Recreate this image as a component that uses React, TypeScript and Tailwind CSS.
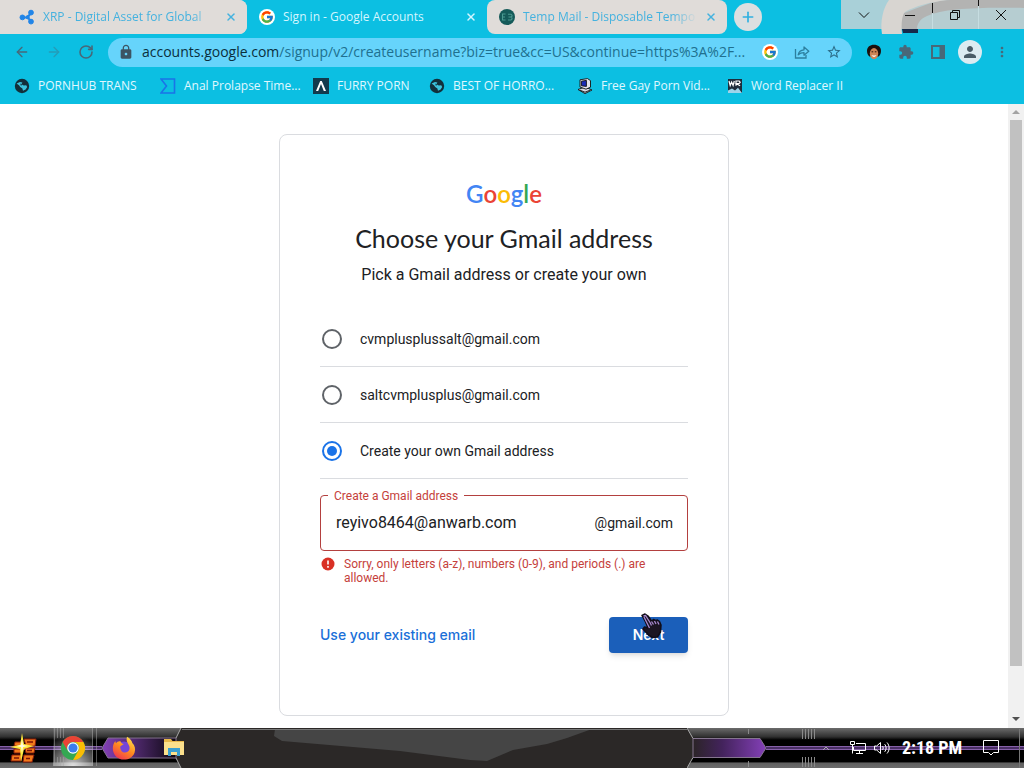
import { useState } from 'react';
import type { ReactNode } from 'react';
import { FcGoogle } from 'react-icons/fc';
import { MdLock, MdStarBorder, MdExtension, MdPerson, MdMoreVert } from 'react-icons/md';
import { ArrowLeft, ArrowRight, RotateCw, X, Plus } from 'lucide-react';

// -----------------------------------------------------------
// SMALL ICONS
// -----------------------------------------------------------
function RippleIcon() {
  return (
    <svg viewBox="0 0 16 16" className="size-4 shrink-0" fill="#2185e8" stroke="#2185e8">
      <path d="M4 8.4 8.5 8.2 12 4M8.5 8.2l3.5 4.3" fill="none" strokeWidth="2" />
      <circle cx="3.4" cy="8.4" r="2.4" />
      <circle cx="12" cy="3.6" r="2.4" />
      <circle cx="12" cy="12.6" r="2.4" />
      <circle cx="8.6" cy="8.2" r="1.6" />
    </svg>
  );
}

function GoogleBadge() {
  return (
    <span className="flex size-4 shrink-0 items-center justify-center rounded-full bg-white">
      <FcGoogle className="size-[14px]" />
    </span>
  );
}

function TempMailIcon() {
  return (
    <svg viewBox="0 0 16 16" className="size-4 shrink-0">
      <circle cx="8" cy="8" r="8" fill="#155a59" />
      <path d="M6.5 5H3.5v6h3M3.5 8h2.5M9 5.2h3l1 1v1l-1 .8H9.5M12 8l1 1v1l-1 1H9" fill="none" stroke="#4b9a91" strokeWidth="1.1" />
    </svg>
  );
}

function GlobeIcon() {
  return (
    <svg viewBox="0 0 16 16" className="size-4 shrink-0">
      <circle cx="8" cy="8" r="7.2" fill="#12303b" />
      <path d="M2.6 5.6 6 4l2.4.6-1 1.6 2.4 1.4 2.4-.4 1 1.8-1.6 2.6-2.6 1.2-.6-2.2L6.2 9 5 7.2z" fill="#3cc3dc" />
      <path d="M6.2 5.6 8 6.4 7 8z" fill="#12303b" />
    </svg>
  );
}

function SigmaIcon() {
  return (
    <svg viewBox="0 0 16 16" className="size-4 shrink-0" fill="none" stroke="#1a73e8" strokeWidth="1.6">
      <path d="M1 1h13.5v14H1l5.5-7z" />
    </svg>
  );
}

function PeakIcon() {
  return (
    <svg viewBox="0 0 16 16" className="size-4 shrink-0">
      <rect width="16" height="16" fill="#123a4d" />
      <path d="M3 13 7.2 3h1.6L13 13h-2.2L8 6l-2.8 7z" fill="#fff" />
    </svg>
  );
}

function OldPcIcon() {
  return (
    <svg viewBox="0 0 16 16" className="size-4 shrink-0" stroke="#111" strokeWidth=".9">
      <path d="M1 11.5 8 9l7 3-7 3.6z" fill="#d8d8e2" />
      <path d="M3 1.8 10.5.6l3 2v6.6l-4.5 2L3 9z" fill="#e4e4ee" />
      <path d="M4.4 3.2 9.4 2.4v6L4.4 7.8z" fill="#1a2cb8" />
      <path d="M3 12.2l5 2 5-2" fill="none" />
    </svg>
  );
}

function WordIcon() {
  return (
    <svg viewBox="0 0 16 16" className="size-4 shrink-0">
      <path d="M1 1h14v14H1z" fill="#1d2c3b" />
      <path d="M2 3l1.2 4.5L4.6 4l1.5 3.5L7.3 3M9 7.8V3h3.2l1 1.2-1 1.3H9.3l3.8 2.3" fill="none" stroke="#fff" strokeWidth="1.2" />
      <path d="M1 15v-2.6l4-2 3 2 3-2.6 4 5.2z" fill="#9fd4ea" />
    </svg>
  );
}

function ShareIcon() {
  return (
    <svg viewBox="0 0 16 16" className="size-4" fill="none" stroke="#2c7f9e" strokeWidth="1.3">
      <path d="M1.5 5v9h10.5v-3" />
      <path d="M4.2 10.8c.6-3.4 2.6-4.8 5.8-5V3l4.8 4.2L10 11.2V8.6c-2.4 0-4.2.6-5.8 2.2z" strokeLinejoin="round" />
    </svg>
  );
}

function FaceIcon() {
  return (
    <svg viewBox="0 0 16 16" className="size-4">
      <path d="M1 7C1 3 4 .8 8 .8S15 3 15 7c0 2.6-1 4.4-2.4 5.4H3.4C2 11.4 1 9.6 1 7z" fill="#1b100d" />
      <ellipse cx="8" cy="9.6" rx="4.2" ry="5.6" fill="#cf8556" />
      <path d="M5.600 7.800h1.600M8.800 7.800h1.600" stroke="#2b140c" strokeWidth="1" />
      <path d="M5.600 11c1.300.8 3.500.8 4.800 0-.4 2.400-4.400 2.400-4.800 0z" fill="#fff" />
    </svg>
  );
}

function SidePanelIcon() {
  return (
    <svg viewBox="0 0 16 16" className="size-4">
      <rect x="2" y="2" width="12" height="12" fill="none" stroke="#486879" strokeWidth="2" />
      <rect x="9.5" y="2" width="4.5" height="12" fill="#486879" />
    </svg>
  );
}

// -----------------------------------------------------------
// TAB STRIP
// -----------------------------------------------------------
interface TabProps {
  icon: ReactNode;
  title: string;
  active?: boolean;
}

function Tab({ icon, title, active }: TabProps) {
  return (
    <div
      className={
        active
          ? 'flex h-[34px] w-60 items-center gap-2 pr-[10px] pl-3 text-[#d4f6ff]'
          : 'flex h-[34px] w-60 items-center gap-2 rounded-lg bg-[#e0dcd9] pr-[10px] pl-3 text-[#45b2df]'
      }
    >
      {icon}
      <button
        className={
          active
            ? 'min-w-0 flex-1 text-left whitespace-nowrap'
            : 'min-w-0 flex-1 mask-r-from-85% text-left whitespace-nowrap'
        }
      >
        {title}
      </button>
      <button aria-label="Close tab" className="shrink-0">
        <X className="size-3" strokeWidth={3} />
      </button>
    </div>
  );
}

function WindowControls() {
  return (
    <div className="relative ml-auto flex h-[29px] w-[183px] self-start bg-[#a9d0d8]">
      {/* theme artwork showing through the caption buttons */}
      <svg viewBox="0 0 183 34" className="absolute top-0 left-0 h-[34px] w-full">
        <path d="M60 0h123v29H60z" fill="#b6cdd1" />
        <path d="M60 14C78 8 92 0 110 0h73v8c-40-1-80 0-97 8-7 3-10 8-10 13H60z" fill="#b3b3b2" />
        <path d="M48 0h58c-16 2-32 6-42 12-3 3-4 11-3 22H41c-2-12 1-26 7-34z" fill="#d8d5d1" />
        <path d="M61 29h16v4H62z" fill="#15294a" />
        <path d="M91.5 12v17M137.5 6v23" stroke="#c6dde1" />
        <path d="M91.5 3v10M137.5 0v6" stroke="#111" />
      </svg>
      <button aria-label="Search tabs" className="relative flex flex-1 items-center justify-center">
        <svg viewBox="0 0 12 12" className="size-3" fill="none" stroke="#111">
          <path d="M1 3.5l5 5 5-5" />
        </svg>
      </button>
      <button aria-label="Minimize" className="relative flex flex-1 items-center justify-center">
        <svg viewBox="0 0 12 12" className="size-3" fill="none" stroke="#111">
          <path d="M1 6.5h10" />
        </svg>
      </button>
      <button aria-label="Restore" className="relative flex flex-1 items-center justify-center">
        <svg viewBox="0 0 12 12" className="size-3" fill="none" stroke="#111">
          <path d="M1.5 3.5h7v7h-7zM3.5 3.5v-2h7v7h-2" />
        </svg>
      </button>
      <button aria-label="Close" className="relative flex flex-1 items-center justify-center">
        <svg viewBox="0 0 12 12" className="size-3" fill="none" stroke="#111">
          <path d="M1 1l10 10M11 1L1 11" />
        </svg>
      </button>
    </div>
  );
}

// -----------------------------------------------------------
// TOOLBAR + BOOKMARKS
// -----------------------------------------------------------
function Toolbar() {
  return (
    <div className="flex h-9 items-center px-[14px] text-[#486879]">
      <div className="flex w-[94px] shrink-0 items-center gap-4">
        <button aria-label="Back"><ArrowLeft className="size-4" /></button>
        <button aria-label="Forward" className="opacity-40"><ArrowRight className="size-4" /></button>
        <button aria-label="Reload"><RotateCw className="size-4" strokeWidth={2.4} /></button>
      </div>
      <div className="flex h-[29px] min-w-0 flex-1 items-center gap-4 rounded-full bg-[#66d4fb] px-[10px]">
        <div className="flex min-w-0 flex-1 items-center gap-2">
          <MdLock className="size-4 shrink-0 text-[#3c5463]" />
          <div className="truncate text-sm text-[#20708f]">
            <span className="text-[#0a2f3d]">accounts.google.com</span>
            /signup/v2/createusername?biz=true&amp;cc=US&amp;continue=https%3A%2F...
          </div>
        </div>
        <GoogleBadge />
        <button aria-label="Share"><ShareIcon /></button>
        <button aria-label="Bookmark this page" className="text-[#2c6d89]"><MdStarBorder className="size-4" /></button>
      </div>
      <div className="ml-[14px] flex shrink-0 items-center gap-4">
        <button aria-label="Extension"><FaceIcon /></button>
        <button aria-label="Extensions"><MdExtension className="size-4" /></button>
        <button aria-label="Side panel"><SidePanelIcon /></button>
        <button aria-label="Profile" className="-mx-1 flex size-6 items-center justify-center rounded-full bg-[#dcebf1]">
          <MdPerson className="size-[18px] text-[#4a5b66]" />
        </button>
        <button aria-label="Menu"><MdMoreVert className="size-4" /></button>
      </div>
    </div>
  );
}

const bookmarks = [
  { icon: <GlobeIcon />, label: 'PORNHUB TRANS', width: 'w-[146px]' },
  { icon: <SigmaIcon />, label: 'Anal Prolapse Time...', width: 'w-[153px]' },
  { icon: <PeakIcon />, label: 'FURRY PORN', width: 'w-[116px]' },
  { icon: <GlobeIcon />, label: 'BEST OF HORRO...', width: 'w-[148px]' },
  { icon: <OldPcIcon />, label: 'Free Gay Porn Vid...', width: 'w-[150px]' },
  { icon: <WordIcon />, label: 'Word Replacer II', width: 'w-[150px]' },
];

function BookmarksBar() {
  return (
    <nav className="flex h-[34px] items-center pb-[2px] pl-[14px] text-xs text-[#e0f8ff]">
      {bookmarks.map((b) => (
        <a key={b.label} href="#" className={`flex shrink-0 items-center gap-2 whitespace-nowrap ${b.width}`}>
          {b.icon}
          {b.label}
        </a>
      ))}
    </nav>
  );
}

// -----------------------------------------------------------
// SIGN-UP CARD
// -----------------------------------------------------------
const choices = ['cvmplusplussalt@gmail.com', 'saltcvmplusplus@gmail.com', 'Create your own Gmail address'];

function HandCursor() {
  return (
    <svg viewBox="0 0 22 26" className="pointer-events-none absolute -top-1 left-8 h-[26px] w-[22px]">
      <path
        d="M1 2.5 4 1l3 2 3.5 5 2-1.5 2 1 2-.5 2 1.5 1.500 3.500-.5 7-3 5-5 .5-4-2.500L2 16l1.500-2 3.500 1L4.500 9z"
        fill="#1b1522"
        stroke="#100c18"
        strokeWidth="1.5"
        strokeLinejoin="round"
      />
      <path d="M2.500 3 4.500 2.500 9 9.500l1.500 3M10.500 8.500l2 3M13.500 8l1.500 3M16.500 8.500l1.500 3M3 4l4 8 1.500 3" fill="none" stroke="#a98ad0" strokeWidth="1.3" />
    </svg>
  );
}

function SignupCard() {
  const [choice, setChoice] = useState(2);
  const [name, setName] = useState('reyivo8464@anwarb.com');

  return (
    <form
      onSubmit={(e) => e.preventDefault()}
      className="mt-[30px] h-fit w-[450px] rounded-lg border border-[#dadce0] px-10 pt-[47px] pb-[62px] font-[Roboto,sans-serif] text-[#202124]"
    >
      <div role="img" aria-label="Google" className="text-center font-[Lato,sans-serif] text-2xl/6 font-semibold">
        <span className="text-[#4285f4]">G</span>
        <span className="text-[#ea4335]">o</span>
        <span className="text-[#fbbc05]">o</span>
        <span className="text-[#4285f4]">g</span>
        <span className="text-[#34a853]">l</span>
        <span className="text-[#ea4335]">e</span>
      </div>
      <h1 className="mt-4 text-center font-[Lato,sans-serif] text-[25px]/8 whitespace-nowrap">Choose your Gmail address</h1>
      <p className="mt-[9px] text-center text-base/6">Pick a Gmail address or create your own</p>

      <div className="mt-6">
        {choices.map((c, i) => (
          <label key={c} className="flex h-14 items-center gap-4 border-b border-[#dadce0] text-sm">
            <span className="flex w-6 justify-center">
              <input
                type="radio"
                name="address"
                checked={choice === i}
                onChange={() => setChoice(i)}
                className="flex size-5 appearance-none items-center justify-center rounded-full border-2 border-[#5f6368] before:size-[10px] before:rounded-full checked:border-[#1a73e8] checked:before:bg-[#1a73e8]"
              />
            </span>
            {c}
          </label>
        ))}
      </div>

      <div className="relative mt-4 flex h-14 items-center rounded border border-[#b3403f] pr-[14px] pl-[15px]">
        <label htmlFor="gmail" className="absolute -top-2 left-[7px] bg-white px-[6px] text-xs/4 text-[#c5413b]">
          Create a Gmail address
        </label>
        <input
          id="gmail"
          value={name}
          onChange={(e) => setName(e.target.value)}
          className="min-w-0 flex-1 text-base outline-none"
        />
        <span className="text-sm">@gmail.com</span>
      </div>
      <div className="mt-[6px] flex gap-2 text-xs/[14px] text-[#c5413b]">
        <svg viewBox="0 0 16 16" className="size-4 shrink-0">
          <circle cx="8" cy="7" r="6.5" fill="#d93025" />
          <path d="M8 3.5v4M8 9v1.7" stroke="#fff" strokeWidth="1.6" />
        </svg>
        <p className="w-[310px]">Sorry, only letters (a-z), numbers (0-9), and periods (.) are allowed.</p>
      </div>

      <div className="mt-8 flex h-9 items-center justify-between font-[Inter,sans-serif] text-sm">
        <a href="#" className="font-medium text-[#1a6fd8]">Use your existing email</a>
        <button className="relative h-9 w-[79px] rounded bg-[#1b5fba] font-semibold text-white shadow-md">
          Next
          <HandCursor />
        </button>
      </div>
    </form>
  );
}

function Scrollbar() {
  return (
    <div className="flex w-4 shrink-0 flex-col items-center bg-[#f1f1f1]">
      <svg viewBox="0 0 8 4" className="my-[6px] h-1 w-2"><path d="M0 4l4-4 4 4z" fill="#a3a3a3" /></svg>
      <div className="w-3 flex-1 bg-[#c1c1c1]" />
      <svg viewBox="0 0 8 4" className="mt-[51px] mb-[7px] h-1 w-2"><path d="M0 0l4 4 4-4z" fill="#505050" /></svg>
    </div>
  );
}

// -----------------------------------------------------------
// TASKBAR
// -----------------------------------------------------------
function TaskbarArt() {
  return (
    <div className="absolute inset-0 flex bg-[#2b2827]">
      <svg viewBox="0 0 182 40" className="h-10 w-[182px] shrink-0">
        <defs>
          <linearGradient id="edge" x2="0" y2="1">
            <stop offset="0" stopColor="#6b6b6b" />
            <stop offset=".22" stopColor="#303030" />
            <stop offset=".3" stopColor="#000" />
            <stop offset=".84" stopColor="#000" />
            <stop offset=".88" stopColor="#606060" />
            <stop offset="1" stopColor="#6c6c6c" />
          </linearGradient>
          <linearGradient id="violetL">
            <stop offset="0" stopColor="#8440b8" />
            <stop offset=".55" stopColor="#43235c" />
            <stop offset="1" stopColor="#0d0812" />
          </linearGradient>
          <radialGradient id="glow" cy="1" r=".8">
            <stop offset="0" stopColor="#fff" stopOpacity=".8" />
            <stop offset="1" stopColor="#fff" stopOpacity=".08" />
          </radialGradient>
        </defs>
        <path d="M0 0h181l-5 10v20l5 10H0z" fill="url(#edge)" />
        <path d="M0 20h102" stroke="#4a2f66" strokeWidth="2" />
        <path d="M0 18.5h102M0 21.5h102" stroke="#8560a8" />
        <path d="M102 20l6-10h68v20h-68z" fill="url(#violetL)" stroke="#85758f" />
        <path d="M181 0l-5 10M176 30l5 10" stroke="#aaa" />
        <path d="M53 0h40v38H53z" fill="url(#glow)" />
        <path d="M54.5 0v38M57.5 0v10M60.5 0v10M63.5 0v10M57.5 29v9M60.5 29v9M63.5 29v9M92.5 0v38M96.5 0v38" stroke="#aaa" strokeOpacity=".5" />
      </svg>
      <svg viewBox="0 0 505 40" preserveAspectRatio="none" className="h-10 min-w-0 flex-1">
        <path d="M93 1h317l-25 9-20 6-34 6-26 11-17-1-70-9L100 13 92 8z" fill="#454545" />
        <path d="M0 1.500h505" stroke="#777" />
      </svg>
      <svg viewBox="0 0 337 40" className="h-10 w-[337px] shrink-0">
        <defs>
          <linearGradient id="violetR">
            <stop offset="0" stopColor="#2b2427" />
            <stop offset=".4" stopColor="#43235c" />
            <stop offset="1" stopColor="#8440b8" />
          </linearGradient>
        </defs>
        <path d="M0 0h337v40H0l6-10V10z" fill="url(#edge)" />
        <path d="M6 10.5h67l6 9.5-6 9.5H6z" fill="url(#violetR)" stroke="#85758f" />
        <path d="M0 0l6 10.5M6 29.5L0 40" stroke="#aaa" />
        <path d="M79 20h258" stroke="#4a2f66" strokeWidth="2" />
        <path d="M79 18.5h258M79 21.5h258" stroke="#8560a8" />
        <path d="M115.5 1v10M118.5 1v10M121.5 1v10M124.5 1v10M127.5 1v10M115.5 29v10M118.5 29v10M121.5 29v10M124.5 29v10M127.5 29v10M61.5 1v5M61.5 33v6" stroke="#8a8a8a" />
        <path d="M332.5 1v39" stroke="#777" />
      </svg>
    </div>
  );
}

function StartIcon() {
  return (
    <svg viewBox="0 0 28 30" className="h-[30px] w-7">
      <path d="M14 6h12l-1 7h-9zM5 9h6v4H4zM4 16h8l-1 4H4zM2 22h10l-1 6H1zM15 15h10l-1 5h-8zM14 22h10l-2 7h-9z" fill="#f2791b" stroke="#8a1d0b" strokeWidth="1" />
      <path d="M17 9h6M17 17.500h5M16 25.500h4M4 25h5" stroke="#7c1607" strokeWidth="1.6" />
      <path d="M12 0l2 11 10 2-10 3-3 13-1-13-10-2 10-2z" fill="#ffe83b" />
      <path d="M12 6l1 6 5 1-5 1-1 6-1-6-5-1 5-1z" fill="#fffde0" />
    </svg>
  );
}

function ChromeIcon() {
  return (
    <svg viewBox="0 0 24 24" className="size-6">
      <circle cx="12" cy="12" r="12" fill="#34a853" />
      <path d="M1.6 6A12 12 0 0 1 22.4 6H12a6 6 0 0 0-5.200 9z" fill="#ea4335" />
      <path d="M22.4 6A12 12 0 0 1 12 24l5.200-9A6 6 0 0 0 12 6z" fill="#fbbc05" />
      <circle cx="12" cy="12" r="5.8" fill="#fff" />
      <circle cx="12" cy="12" r="4.6" fill="#3b7ded" />
    </svg>
  );
}

function FirefoxIcon() {
  return (
    <svg viewBox="0 0 24 24" className="size-6">
      <defs>
        <linearGradient id="fox" x1=".8" y1="0" x2=".2" y2="1">
          <stop offset="0" stopColor="#ffe14a" />
          <stop offset=".5" stopColor="#ff8a1f" />
          <stop offset="1" stopColor="#ee2f55" />
        </linearGradient>
      </defs>
      <circle cx="12" cy="12.500" r="7" fill="#7545d8" />
      <path
        d="M15 .8c3.500 2.200 5 4.200 5.300 6.200 2.700 2.600 3.400 6 2.300 9.400C21 21 16.800 23.600 12 23.600 5.600 23.600.8 18.600.8 12.400.8 9.400 1.800 6.600 3.400 5c0 1 .2 1.600.6 2.200 1-1.600 2.500-2.300 4.500-2 .3 1.600 1.400 2.400 3.300 2.800-1.500 1.200-3 1.800-3.600 2.800 0 3.600 2.200 6 5 5.800 3.200-.2 5-2.800 4.200-6C16.700 7.600 13.500 6 15 .8z"
        fill="url(#fox)"
      />
    </svg>
  );
}

function FolderIcon() {
  return (
    <svg viewBox="0 0 22 20" className="h-5 w-[22px]">
      <path d="M1 1h7l1.500 2H21v14H1z" fill="#e8b84a" />
      <path d="M1 4h20v13H1z" fill="#fbe08c" />
      <path d="M5 10h12v8h-3v-4H8v4H5z" fill="#3a9fd0" />
    </svg>
  );
}

function Taskbar() {
  return (
    <footer className="relative h-10 shrink-0 overflow-hidden">
      <TaskbarArt />
      <div className="relative flex h-full items-center justify-between pr-6 pl-[10px] text-white">
        <div className="flex items-center gap-[27px]">
          <button aria-label="Start"><StartIcon /></button>
          <button aria-label="Chrome" className="-ml-1"><ChromeIcon /></button>
          <button aria-label="Firefox"><FirefoxIcon /></button>
          <button aria-label="File Explorer"><FolderIcon /></button>
        </div>
        <div className="flex items-center gap-2">
          <button aria-label="Show hidden icons" className="mr-3">
            <svg viewBox="0 0 8 8" className="size-2" fill="none" stroke="#aaa"><path d="M1 6l3-3 3 3" /></svg>
          </button>
          <svg viewBox="0 0 16 16" className="size-4" fill="none" stroke="#fff">
            <path d="M6 3.5h9.5v7H3.5V7M9.500 11v2.500M6 13.500h7" />
            <path d="M.5 1.500h4v3h-4zM2.500 5v8.500" />
          </svg>
          <svg viewBox="0 0 16 16" className="size-4" fill="none" stroke="#fff">
            <path d="M.5 6h2.200L6.500 2.500v11L2.700 10H.5zM8.500 6c.9 1.200.9 2.800 0 4M10.700 4.200c1.900 2.200 1.900 5.400 0 7.600M13 2.500c2.800 3.200 2.800 7.800 0 11" />
          </svg>
          <time className="mx-1 w-[60px] text-center font-['Liberation_Sans_Narrow','Roboto_Condensed',Roboto,sans-serif] text-lg font-bold whitespace-nowrap">
            2:18 PM
          </time>
          <button aria-label="Notifications" className="ml-2">
            <svg viewBox="0 0 18 18" className="size-[18px]" fill="none" stroke="#fff">
              <path d="M1.5 1.5h15v12h-5L9 16l-2.500-2.500h-5z" />
            </svg>
          </button>
        </div>
      </div>
    </footer>
  );
}

// -----------------------------------------------------------
// MAIN
// -----------------------------------------------------------
export default function App() {
  return (
    <div className="flex h-screen flex-col overflow-hidden bg-white">
      <header className="shrink-0 bg-[#0cbfe2] font-['Open_Sans',sans-serif]">
        <div className="flex h-[34px] items-center text-xs">
          <div className="flex rounded-r-lg bg-[#e0dcd9] pl-[7px]">
            <Tab icon={<RippleIcon />} title="XRP - Digital Asset for Global" />
          </div>
          <Tab icon={<GoogleBadge />} title="Sign in - Google Accounts" active />
          <Tab icon={<TempMailIcon />} title="Temp Mail - Disposable Tempo" />
          <button aria-label="New tab" className="ml-[7px] flex size-7 items-center justify-center rounded-full bg-[#dcdfe0] text-[#2fb0e0]">
            <Plus className="size-4" strokeWidth={2.5} />
          </button>
          <WindowControls />
        </div>
        <Toolbar />
        <BookmarksBar />
      </header>

      <main className="flex min-h-0 flex-1">
        <div className="flex min-w-0 flex-1 justify-center">
          <SignupCard />
        </div>
        <Scrollbar />
      </main>

      <Taskbar />
    </div>
  );
}
